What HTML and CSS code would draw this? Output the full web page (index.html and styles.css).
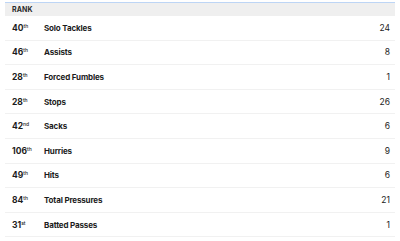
FILE: index.html
```html
<!DOCTYPE html>
<html>
<head>
<meta charset="utf-8">
<link rel="stylesheet" href="styles.css">
</head>
<body>
<div class="wrap">
  <div class="table">
    <div class="head"><span class="rank-h">RANK</span></div>
    <div class="row"><span class="rank">40<sup>th</sup></span><span class="label">Solo Tackles</span><span class="val">24</span></div>
    <div class="row"><span class="rank">46<sup>th</sup></span><span class="label">Assists</span><span class="val">8</span></div>
    <div class="row"><span class="rank">28<sup>th</sup></span><span class="label">Forced Fumbles</span><span class="val">1</span></div>
    <div class="row"><span class="rank">28<sup>th</sup></span><span class="label">Stops</span><span class="val">26</span></div>
    <div class="row"><span class="rank">42<sup>nd</sup></span><span class="label">Sacks</span><span class="val">6</span></div>
    <div class="row"><span class="rank">106<sup>th</sup></span><span class="label">Hurries</span><span class="val">9</span></div>
    <div class="row"><span class="rank">49<sup>th</sup></span><span class="label">Hits</span><span class="val">6</span></div>
    <div class="row"><span class="rank">84<sup>th</sup></span><span class="label">Total Pressures</span><span class="val">21</span></div>
    <div class="row"><span class="rank">31<sup>st</sup></span><span class="label">Batted Passes</span><span class="val">1</span></div>
  </div>
</div>
</body>
</html>
```
FILE: styles.css
```css
html, body { margin: 0; padding: 0; background: #fff; }
body { font-family: Inter, "Liberation Sans", sans-serif; color: #1c1c1c; }
.wrap { padding: 2px 5px 0 5px; }
.table { border-top: 1px solid #bdd5f5; }
.head {
  height: 13px;
  background: #efefef;
  display: flex;
  align-items: center;
  padding-left: 7px;
}
.rank-h { font-size: 7px; font-weight: 700; letter-spacing: 0.1px; color: #2a2a2a; }
.row {
  height: 23.6px;
  border-bottom: 1px solid #f1f1f1;
  display: flex;
  align-items: center;
  padding: 0 5px 0 7px;
  font-size: 8px;
  font-weight: 700;
}
.rank { width: 32px; font-weight: 700; font-size: 8.5px; }
.rank sup { font-size: 5px; font-weight: 500; vertical-align: 3px; line-height: 0; }
.label { flex: 1; letter-spacing: -0.15px; }
.val { font-weight: 400; font-size: 8.5px; }
```
